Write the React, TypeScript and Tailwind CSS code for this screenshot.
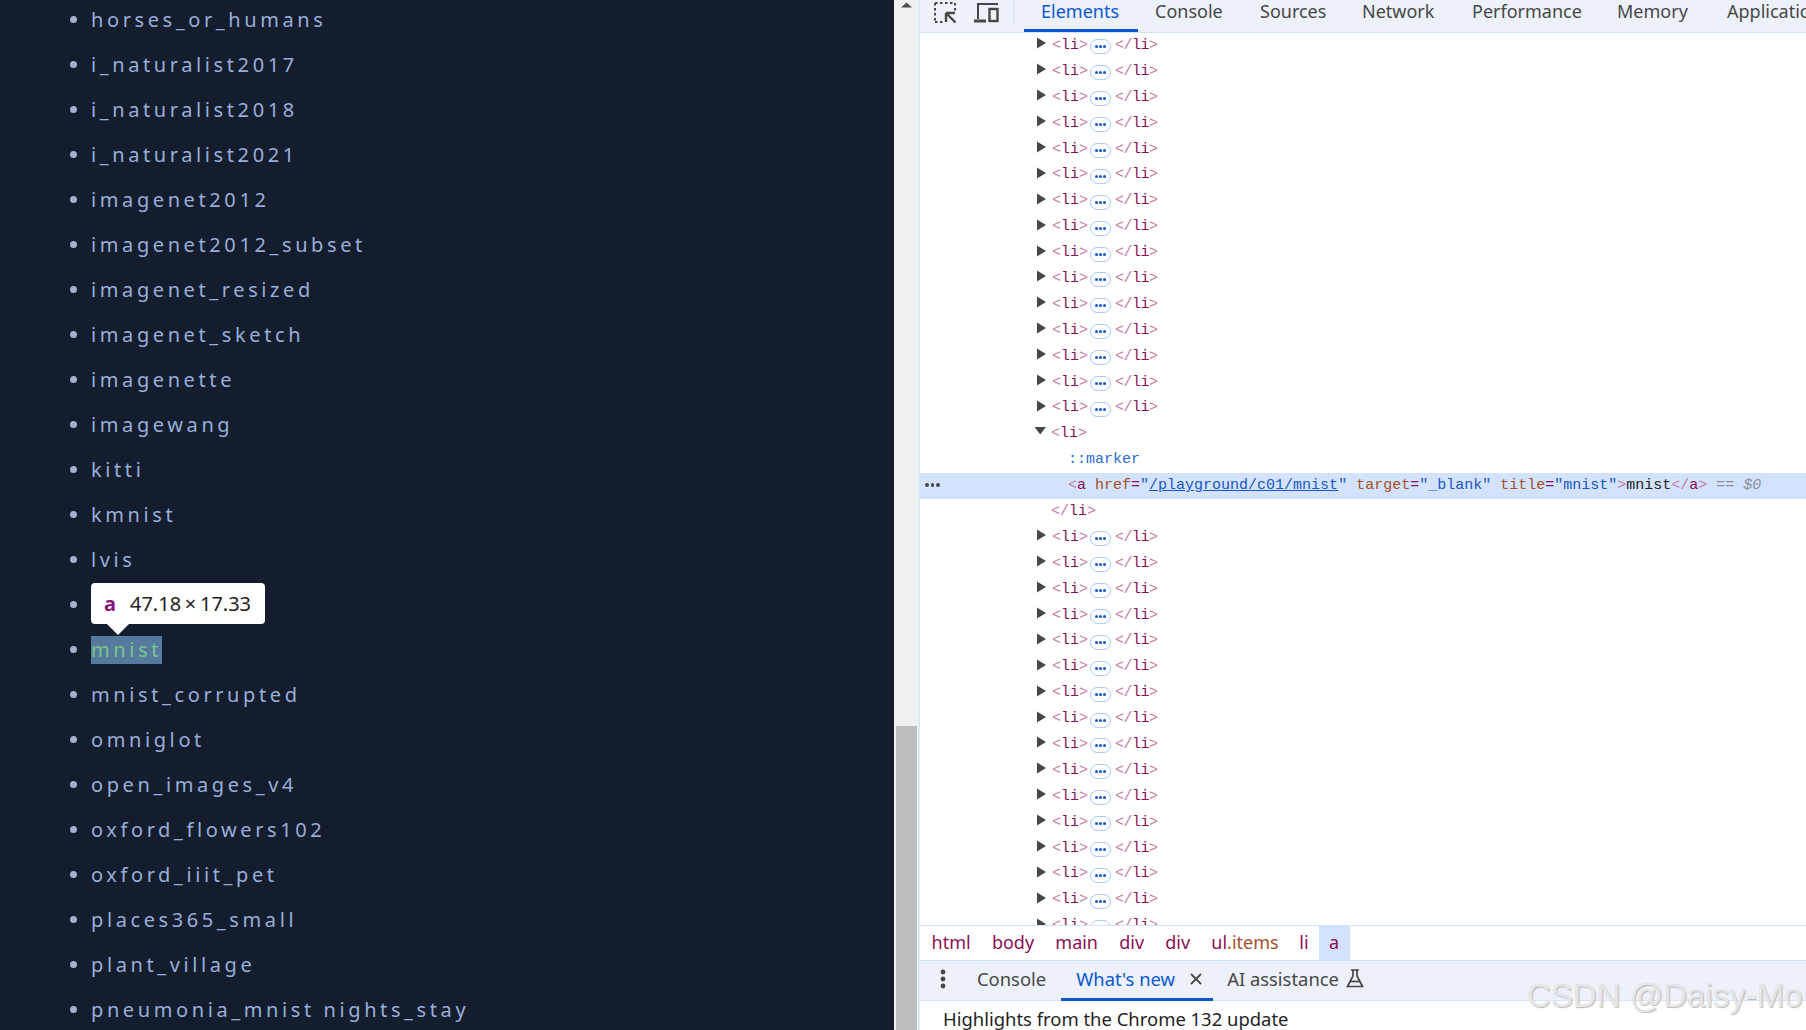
import React from "react";

const items: string[] = [
  "horses_or_humans", "i_naturalist2017", "i_naturalist2018", "i_naturalist2021", "imagenet2012",
  "imagenet2012_subset", "imagenet_resized", "imagenet_sketch", "imagenette", "imagewang", "kitti",
  "kmnist", "lvis", "", "mnist", "mnist_corrupted", "omniglot", "open_images_v4", "oxford_flowers102",
  "oxford_iiit_pet", "places365_small", "plant_village", "pneumonia_mnist nights_stay",
];

function Arrow({ open = false }: { open?: boolean }) {
  return (
    <svg width="12" height="12" viewBox="0 0 12 12" className="mt-[-5px] shrink-0">
      {open ? <path d="M0.5 1 H12 L6.25 8.5 Z" fill="#474747" /> : <path d="M2 0.5 L11 6 L2 11.5 Z" fill="#474747" />}
    </svg>
  );
}

function Bracket({ children }: { children: React.ReactNode }) {
  return <span className="text-[#c77aa5]">{children}</span>;
}

function Collapsed() {
  return (
    <div className="flex h-[25.9px] items-center pl-[115px]">
      <Arrow />
      <span className="ml-[5px]">
        <Bracket>&lt;</Bracket>
        <span className="text-[#8b0f55]">li</span>
        <Bracket>&gt;</Bracket>
      </span>
      <span className="ml-[2px] mr-[4px] mt-[2px] flex h-[15px] w-[21px] items-center justify-center gap-[1px] rounded-full border border-[#a8c7fa]">
        <i className="size-[3px] rounded-full bg-[#0b57d0]" />
        <i className="size-[3px] rounded-full bg-[#0b57d0]" />
        <i className="size-[3px] rounded-full bg-[#0b57d0]" />
      </span>
      <span className="tracking-[-0.5px]">
        <Bracket>&lt;/</Bracket>
        <span className="text-[#8b0f55]">li</span>
        <Bracket>&gt;</Bracket>
      </span>
    </div>
  );
}

const mainTabs: { t: string; c: string }[] = [
  { t: "Console", c: "w-[105px]" },
  { t: "Sources", c: "w-[102px]" },
  { t: "Network", c: "w-[110px]" },
  { t: "Performance", c: "w-[145px]" },
  { t: "Memory", c: "w-[110px]" },
  { t: "Application", c: "w-[120px]" },
];
const crumbs = ["html", "body", "main", "div", "div"];

export default function App() {
  return (
    <div className="relative flex h-[1030px] w-[1806px] overflow-hidden bg-white font-['Noto_Sans','Open_Sans',sans-serif]">
      {/* Page */}
      <div className="h-full w-[894px] shrink-0 overflow-hidden bg-[#141d2d]">
        <ul className="mt-[-3px] pl-[70px]">
          {items.map((t, i) => (
            <li key={i} className="relative flex h-[45px] items-center gap-[14px] text-[20px] tracking-[3.6px] text-[#98aed8]">
              <span className="size-[7px] shrink-0 rounded-full bg-[#a3b1cc]" />
              {t === "mnist" ? (
                <a className="flex h-[28px] items-center bg-[#56799e] text-[#7ac58b]">{t}</a>
              ) : (
                <a>{t}</a>
              )}
              {i === 13 && (
                <div className="absolute left-[21px] top-[1px] flex h-[41px] w-[174px] items-center rounded-[4px] bg-white pl-[13px] tracking-normal">
                  <span className="font-bold text-[#881280]">a</span>
                  <span className="ml-[14px] text-[#222222] [word-spacing:-1.5px]">47.18 × 17.33</span>
                  <span className="absolute left-[16px] top-[41px] size-0 border-x-[11px] border-t-[11px] border-x-transparent border-t-white" />
                </div>
              )}
            </li>
          ))}
        </ul>
      </div>

      {/* Scrollbar */}
      <div className="flex h-full w-[24px] shrink-0 flex-col justify-between bg-[#f1f1f1] pl-[2px] pr-[1px]">
        <svg width="21" height="10" viewBox="0 0 21 10">
          <path d="M5 7.5 L10.5 2.5 L16 7.5 Z" fill="#505050" />
        </svg>
        <div className="h-[304px] bg-[#bebebe]" />
      </div>

      {/* DevTools */}
      <div className="flex h-full min-w-0 flex-1 flex-col border-l-2 border-[#dfe6f6] text-[#474747]">
        <div className="flex h-[33px] shrink-0 items-start overflow-hidden border-b border-[#d3e3fd] bg-[#edf1fa] text-[18px]">
          <svg width="24" height="24" viewBox="0 0 24 24" className="ml-[13px] mt-[1px] shrink-0" fill="none" stroke="#474747">
            <path d="M2 2 h20 M2 2 v19 M22 2 v9 M2 21 h9" strokeWidth="2" strokeDasharray="2.5 2.5" />
            <path d="M13 12 H22 M13 12 V21 M13 12 L22.5 21.5" strokeWidth="2.4" />
          </svg>
          <svg width="26" height="24" viewBox="0 0 26 24" className="ml-[17px] mt-[1px] shrink-0" fill="none" stroke="#474747" strokeWidth="2">
            <path d="M4 18 V3 H24" />
            <path d="M0 20 H12" strokeWidth="3" />
            <rect x="15.5" y="8" width="8" height="12" strokeWidth="2.4" />
          </svg>
          <div className="ml-[13px] h-[24px] w-[2px] shrink-0 bg-[#dde4f3]" />
          <div className="relative ml-[9px] h-[32px] w-[114px] shrink-0 pl-[17px] leading-[22px] text-[#0b57d0]">
            Elements
            <span className="absolute bottom-0 left-0 h-[3px] w-full bg-[#0b57d0]" />
          </div>
          {mainTabs.map(({ t, c }) => (
            <div key={t} className={"shrink-0 whitespace-nowrap pl-[17px] leading-[22px] " + c}>
              {t}
            </div>
          ))}
        </div>

        <div className="min-h-0 flex-1 overflow-hidden font-['Liberation_Mono',monospace] text-[15px] leading-[26px]">
          <div>
            {Array.from({ length: 15 }).map((_, i) => (
              <Collapsed key={i} />
            ))}
            <div className="flex h-[25.9px] items-center pl-[114px]">
              <Arrow open />
              <span className="ml-[5px]">
                <Bracket>&lt;</Bracket>
                <span className="text-[#8b0f55]">li</span>
                <Bracket>&gt;</Bracket>
              </span>
            </div>
            <div className="h-[25.9px] pl-[148px] text-[#2a6bd0]">::marker</div>
            <div className="relative h-[25.9px] whitespace-nowrap bg-[#d3e3fd] pl-[148px]">
              <span className="absolute left-[5px] top-[10px] flex gap-[2px]">
                <i className="size-[3.5px] rounded-full bg-[#474747]" />
                <i className="size-[3.5px] rounded-full bg-[#474747]" />
                <i className="size-[3.5px] rounded-full bg-[#474747]" />
              </span>
              <Bracket>&lt;</Bracket>
              <span className="text-[#8b0f55]">a</span>{" "}
              <span className="text-[#a5502a]">href</span>
              <span className="text-[#8b0f55]">=</span>
              <span className="text-[#1a56c4]">"</span>
              <span className="text-[#1a56c4] underline">/playground/c01/mnist</span>
              <span className="text-[#1a56c4]">"</span>{" "}
              <span className="text-[#a5502a]">target</span>
              <span className="text-[#8b0f55]">=</span>
              <span className="text-[#1a56c4]">"_blank"</span>{" "}
              <span className="text-[#a5502a]">title</span>
              <span className="text-[#8b0f55]">=</span>
              <span className="text-[#1a56c4]">"mnist"</span>
              <Bracket>&gt;</Bracket>
              <span className="text-[#222222]">mnist</span>
              <Bracket>&lt;/</Bracket>
              <span className="text-[#8b0f55]">a</span>
              <Bracket>&gt;</Bracket>
              <span className="italic text-[#8a8f99]"> == $0</span>
            </div>
            <div className="h-[25.9px] pl-[131px]">
              <Bracket>&lt;/</Bracket>
              <span className="text-[#8b0f55]">li</span>
              <Bracket>&gt;</Bracket>
            </div>
            {Array.from({ length: 16 }).map((_, i) => (
              <Collapsed key={i} />
            ))}
          </div>
        </div>

        <div className="flex h-[36px] shrink-0 items-stretch border-y border-[#d3e3fd] bg-white pl-[1px] text-[18px] text-[#8b0f55]">
          {crumbs.map((c, i) => (
            <span key={i} className="flex items-center px-[10.6px] pb-[2px]">{c}</span>
          ))}
          <span className="flex items-center px-[10.6px] pb-[2px]">
            ul<span className="text-[#a5502a]">.items</span>
          </span>
          <span className="flex items-center px-[10px] pb-[2px]">li</span>
          <span className="flex items-center bg-[#d3e3fd] px-[10.5px] pb-[2px]">a</span>
        </div>

        <div className="flex h-[40px] shrink-0 items-stretch border-b border-[#d3e3fd] bg-[#edf1fa] text-[18.4px]">
          <svg width="6" height="20" viewBox="0 0 6 20" className="ml-[20px] mt-[8px] shrink-0" fill="#474747">
            <circle cx="3" cy="3" r="2.4" />
            <circle cx="3" cy="10" r="2.4" />
            <circle cx="3" cy="17" r="2.4" />
          </svg>
          <span className="ml-[31px] flex items-center pb-[3px]">Console</span>
          <div className="relative ml-[15px] flex w-[152px] items-center pb-[3px] pl-[15px] text-[#0b57d0]">
            What's new
            <svg width="12" height="12" viewBox="0 0 12 12" className="absolute left-[129px] top-[12px]" stroke="#474747" strokeWidth="1.8">
              <path d="M1 1 L11 11 M11 1 L1 11" />
            </svg>
            <span className="absolute bottom-[-1px] left-0 h-[3px] w-full bg-[#0b57d0]" />
          </div>
          <span className="ml-[14px] flex items-center pb-[3px]">AI assistance</span>
          <svg width="18" height="19" viewBox="0 0 18 19" className="ml-[7px] mt-[8px] shrink-0" fill="none" stroke="#474747" strokeWidth="1.7">
            <path d="M5 1 H13 M7 1 V7 L1.5 17.5 H16.5 L11 7 V1" />
            <path d="M4 12.5 H14" />
          </svg>
        </div>

        <div className="h-[29px] shrink-0 overflow-hidden pl-[23px] pt-[4px] text-[18.45px] leading-[28px] text-[#1f1f1f]">
          Highlights from the Chrome 132 update
        </div>
      </div>

      <span className="absolute left-[1527px] top-[977px] whitespace-nowrap font-['Liberation_Sans',sans-serif] text-[33px] leading-[38px] text-[#e4e4e4] opacity-90 [text-shadow:1px_1px_1px_#b5b5b5]">
        CSDN @Daisy-Mo
      </span>
    </div>
  );
}
